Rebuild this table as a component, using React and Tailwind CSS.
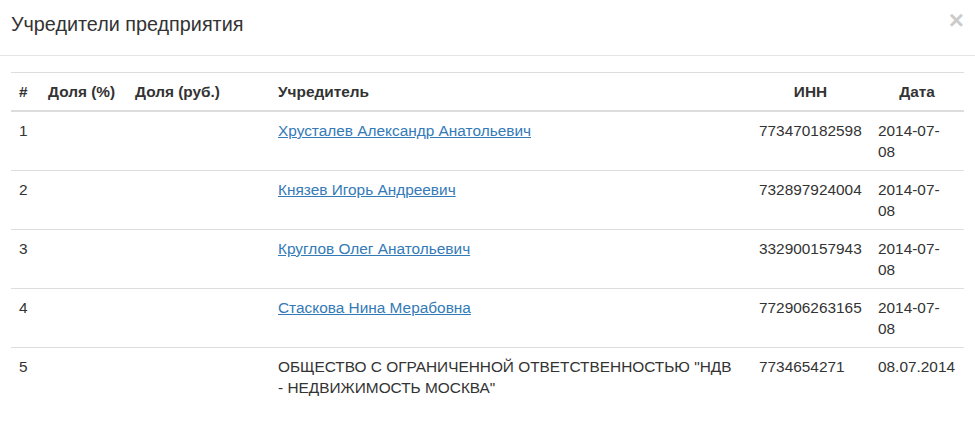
import React from 'react';

const rows = [
  { n: 1, name: 'Хрусталев Александр Анатольевич', inn: '773470182598', date: '2014-07-08', link: true },
  { n: 2, name: 'Князев Игорь Андреевич', inn: '732897924004', date: '2014-07-08', link: true },
  { n: 3, name: 'Круглов Олег Анатольевич', inn: '332900157943', date: '2014-07-08', link: true },
  { n: 4, name: 'Стаскова Нина Мерабовна', inn: '772906263165', date: '2014-07-08', link: true },
  { n: 5, name: 'ОБЩЕСТВО С ОГРАНИЧЕННОЙ ОТВЕТСТВЕННОСТЬЮ "НДВ - НЕДВИЖИМОСТЬ МОСКВА"', inn: '7734654271', date: '08.07.2014', link: false },
];

export default function App() {
  return (
    <div className="w-[975px] h-[433px] bg-white text-[#333] font-['Liberation_Sans',Arial,sans-serif] text-[15.4px] leading-[21px]">
      {/* Header */}
      <div className="h-[56px] border-b border-[#e5e5e5] px-[11px] flex items-start justify-between">
        <h4 className="mt-[11px] text-[19.8px] leading-[27px] font-normal">Учредители предприятия</h4>
        <button className="mt-[5px] text-[26px] font-bold leading-[30px] text-black opacity-20">×</button>
      </div>

      {/* Body */}
      <div className="px-[11px] pt-[16px]">
        <table className="w-[953px] table-fixed border-collapse border-t border-[#ddd]">
          <colgroup>
            <col className="w-[29px]" />
            <col className="w-[87px]" />
            <col className="w-[143px]" />
            <col className="w-[481px]" />
            <col className="w-[119px]" />
            <col className="w-[94px]" />
          </colgroup>
          <thead>
            <tr className="border-b-2 border-[#ddd]">
              <th className="p-[8px] text-left font-bold">#</th>
              <th className="p-[8px] text-left font-bold">Доля (%)</th>
              <th className="p-[8px] text-left font-bold">Доля (руб.)</th>
              <th className="p-[8px] text-left font-bold">Учредитель</th>
              <th className="p-[8px] text-center font-bold">ИНН</th>
              <th className="p-[8px] text-center font-bold">Дата</th>
            </tr>
          </thead>
          <tbody>
            {rows.map((r) => (
              <tr key={r.n} className="border-b border-[#ddd] last:border-b-0 align-top">
                <td className="p-[8px]">{r.n}</td>
                <td className="p-[8px]"></td>
                <td className="p-[8px]"></td>
                <td className="py-[8px] pl-[8px] pr-[16px]">
                  {r.link ? (
                    <a href="#" className="text-[#337ab7] underline">{r.name}</a>
                  ) : (
                    r.name
                  )}
                </td>
                <td className="p-[8px]">{r.inn}</td>
                <td className="p-[8px]">{r.date}</td>
              </tr>
            ))}
          </tbody>
        </table>
      </div>
    </div>
  );
}
